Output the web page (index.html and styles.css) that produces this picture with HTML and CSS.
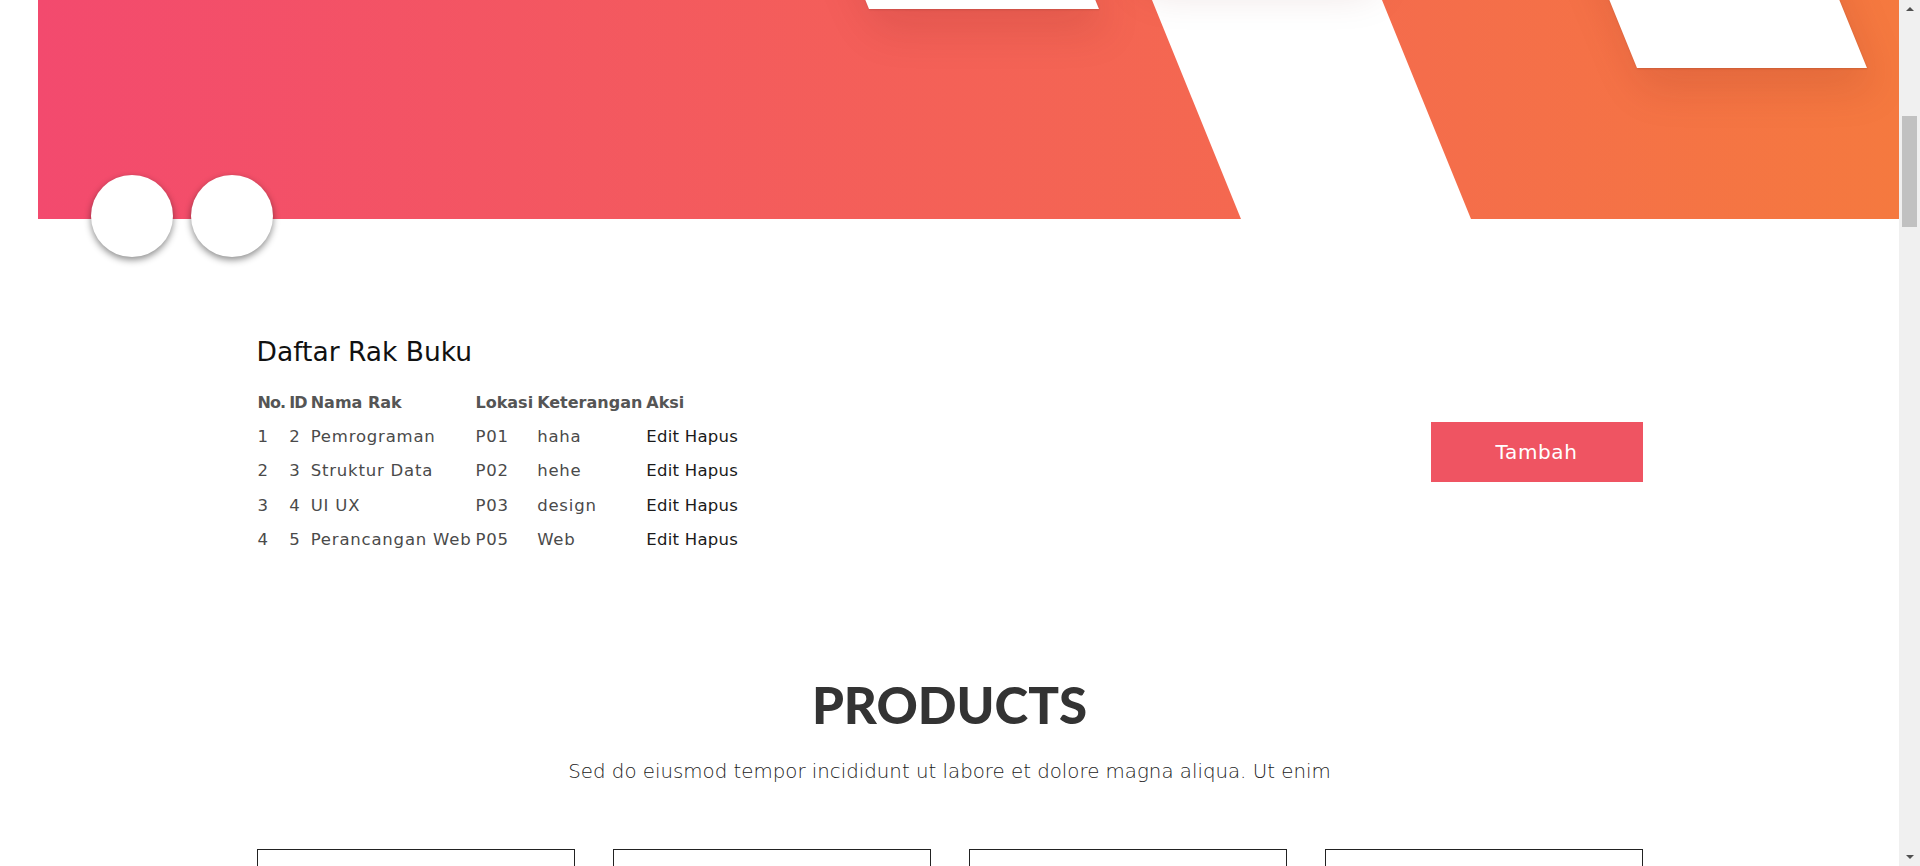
FILE: index.html
```html
<!DOCTYPE html>
<html lang="id">
<head>
<meta charset="utf-8">
<title>Daftar Rak Buku</title>
<link rel="stylesheet" href="styles.css">
</head>
<body>
<div class="page">
  <header class="hero">
    <div class="stripe"></div>
    <div class="card card-c"></div>
    <div class="card card-a"></div>
    <div class="card card-b"></div>
  </header>
  <div class="dots">
    <span class="dot"></span>
    <span class="dot"></span>
  </div>

  <section class="shelf container">
    <div class="shelf-list">
      <h3 class="shelf-title">Daftar Rak Buku</h3>
      <table class="shelf-table">
        <thead>
          <tr><th class="tight">No.</th><th class="tight">ID</th><th>Nama Rak</th><th>Lokasi</th><th>Keterangan</th><th>Aksi</th></tr>
        </thead>
        <tbody>
          <tr><td>1</td><td>2</td><td>Pemrograman</td><td>P01</td><td>haha</td><td class="act"><a href="#">Edit</a> <a href="#">Hapus</a></td></tr>
          <tr><td>2</td><td>3</td><td>Struktur Data</td><td>P02</td><td>hehe</td><td class="act"><a href="#">Edit</a> <a href="#">Hapus</a></td></tr>
          <tr><td>3</td><td>4</td><td>UI UX</td><td>P03</td><td>design</td><td class="act"><a href="#">Edit</a> <a href="#">Hapus</a></td></tr>
          <tr><td>4</td><td>5</td><td>Perancangan Web</td><td>P05</td><td>Web</td><td class="act"><a href="#">Edit</a> <a href="#">Hapus</a></td></tr>
        </tbody>
      </table>
    </div>
    <a class="btn-add" href="#">Tambah</a>
  </section>

  <section class="products container">
    <h2 class="products-title">PRODUCTS</h2>
    <p class="products-sub">Sed do eiusmod tempor incididunt ut labore et dolore magna aliqua. Ut enim</p>
    <div class="product-grid">
      <div class="product-card"></div>
      <div class="product-card"></div>
      <div class="product-card"></div>
      <div class="product-card"></div>
    </div>
  </section>
</div>

<div class="vscroll" aria-hidden="true">
  <span class="vscroll-up"></span>
  <span class="vscroll-thumb"></span>
  <span class="vscroll-down"></span>
</div>
<script src="script.js"></script>
</body>
</html>
```

FILE: styles.css
```css
* { box-sizing: border-box; }

html, body {
  margin: 0;
  padding: 0;
}

::-webkit-scrollbar { display: none; }

body {
  font-family: "DejaVu Sans", "Noto Sans", sans-serif;
  color: #212529;
  background: #fff;
}

.page { margin-right: 21px; }

/* ---------- window scrollbar (as in the capture) ---------- */
.vscroll {
  position: fixed;
  top: 0;
  right: 0;
  bottom: 0;
  width: 21px;
  background: #f0f0f0;
  display: flex;
  flex-direction: column;
  align-items: center;
  z-index: 10;
}
.vscroll-up {
  margin-top: 7px;
  width: 0;
  height: 0;
  border-left: 4px solid transparent;
  border-right: 4px solid transparent;
  border-bottom: 4px solid #505050;
}
.vscroll-thumb {
  margin-top: 105px;
  width: 15px;
  height: 111px;
  background: #c1c1c1;
}
.vscroll-down {
  margin-top: auto;
  margin-bottom: 7px;
  width: 0;
  height: 0;
  border-left: 4px solid transparent;
  border-right: 4px solid transparent;
  border-top: 4px solid #505050;
}

/* ---------- hero ---------- */
.hero {
  position: relative;
  height: 960px;
  margin-left: 38px;
  overflow: hidden;
  background: linear-gradient(90deg, #f34a6e 0%, #f5793f 100%);
}

.stripe {
  position: absolute;
  left: 1203px;
  bottom: 0;
  width: 230px;
  height: 960px;
  background: #fff;
  transform: skewX(22.12deg);
  transform-origin: 0 100%;
}

.card {
  position: absolute;
  width: 230px;
  height: 300px;
  background: #fff;
  transform: skewX(22.12deg);
  transform-origin: 0 100%;
  box-shadow: 0 1px 2px rgba(0, 0, 0, 0.12), 0 22px 40px rgba(110, 20, 20, 0.13);
}
.card-a { left: 831px; top: 450px; }
.card-b { left: 1599px; top: 509px; }
.card-c { left: 1102px; top: 411px; }

.dots {
  position: relative;
  z-index: 2;
  display: flex;
  gap: 18px;
  margin: -44px 0 0 91px;
}
.dot {
  width: 82px;
  height: 82px;
  border-radius: 50%;
  background: #fff;
  box-shadow: 0 3px 7px rgba(0, 0, 0, 0.45);
}

/* ---------- shelf list ---------- */
.container {
  width: 1386px;
  margin: 0 auto;
}

.shelf {
  display: flex;
  justify-content: space-between;
  align-items: flex-start;
  padding-top: 79px;
}

.shelf-title {
  margin: 0 0 17px;
  font-size: 26.5px;
  font-weight: 400;
  line-height: 1.2;
  color: #111;
}

.shelf-table {
  margin-left: -2px;
  border-spacing: 2px;
  font-size: 16.5px;
  line-height: 30.3px;
  color: #4a4a4a;
}
.shelf-table th {
  padding: 1px;
  text-align: left;
  font-size: 16px;
  font-weight: 700;
  color: #555;
}
.shelf-table th.tight { letter-spacing: -0.9px; }
.shelf-table td {
  padding: 1px;
  font-weight: 400;
  letter-spacing: 0.8px;
}
.shelf-table td.act { letter-spacing: 0.25px; }
.shelf-table .act a {
  color: #1a1a1a;
  text-decoration: none;
}

.btn-add {
  margin-top: 86px;
  width: 212px;
  height: 60px;
  display: flex;
  align-items: center;
  justify-content: center;
  background: #ef5462;
  color: #fff;
  font-size: 20px;
  letter-spacing: 0.6px;
  text-decoration: none;
}

/* ---------- products ---------- */
.products {
  padding-top: 116px;
  text-align: center;
}
.products-title {
  margin: 0;
  font-family: Lato, "DejaVu Sans", sans-serif;
  font-weight: 900;
  font-size: 51px;
  line-height: 1.2;
  color: #333;
}
.products-sub {
  margin: 23px 0 0;
  font-size: 19.8px;
  line-height: 27px;
  font-weight: 300;
  color: #222;
}
.product-grid {
  display: grid;
  grid-template-columns: repeat(4, 1fr);
  gap: 38px;
  margin-top: 64px;
}
.product-card {
  height: 420px;
  border: 1px solid #222;
}
```

FILE: script.js
```js
if ('scrollRestoration' in history) { history.scrollRestoration = 'manual'; }
function goToView() { window.scrollTo(0, 741); }
goToView();
window.addEventListener('load', goToView);
```
